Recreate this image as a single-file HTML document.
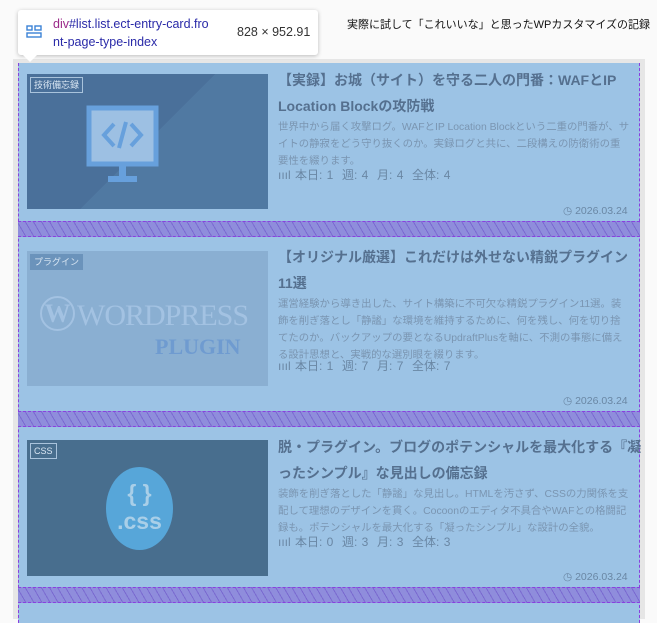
<!DOCTYPE html>
<html><head><meta charset="utf-8"><style>
*{box-sizing:border-box;margin:0;padding:0}
body{width:657px;height:611px;overflow:hidden;background:#fafafa;font-family:"Liberation Sans","Noto Sans CJK JP",sans-serif;position:relative}
.gray{position:absolute;left:13px;top:59px;width:632px;height:560px;background:#e6e6e6}
.blue{position:absolute;left:18px;top:63px;width:622px;height:560px;background:#9cc3e5;border-left:1px dashed #8a3fe0;border-right:1px dashed #8a3fe0}
.stripe{position:absolute;left:18px;width:622px;height:16px;border-top:1px dashed #8a3fe0;border-bottom:1px dashed #8a3fe0;background:#8f8ddc repeating-linear-gradient(60deg,transparent 0 6px,#7a6ad0 6px 7px)}
.thumb{position:absolute;left:27px;width:241px;overflow:hidden}
.tag{position:absolute;left:3px;top:3px;font-size:9px;color:#d9e6f3;border:1px solid #a9c3dc;padding:1px 3px;line-height:12px}
.title{position:absolute;left:278px;font-size:14px;line-height:26px;color:#55708f;font-weight:bold;white-space:nowrap}
.desc{position:absolute;left:278px;width:352px;font-size:10.4px;line-height:17px;color:#7a95b1}
.stat{position:absolute;left:278px;font-size:12px;color:#6a87a4;word-spacing:1px;white-space:nowrap}
.date{position:absolute;left:563px;font-size:10.5px;color:#6a87a4}
.tip{position:absolute;left:18px;top:10px;width:300px;height:45px;background:#fff;border-radius:3px;box-shadow:0 1px 4px rgba(0,0,0,.25)}
</style></head><body>
<div style="position:absolute;left:347px;top:16px;font-size:11px;color:#111;white-space:nowrap">実際に試して「これいいな」と思ったWPカスタマイズの記録</div>
<div class="gray"></div>
<div class="blue"></div>
<div class="stripe" style="top:221px"></div>
<div class="stripe" style="top:411px"></div>
<div class="stripe" style="top:587px"></div>

<div class="tip">
<svg style="position:absolute;left:8px;top:15px" width="16" height="13" viewBox="0 0 16 13" fill="none" stroke="#3b82d6" stroke-width="1.4"><rect x="1" y="1" width="5" height="4"/><rect x="9" y="1" width="6" height="4"/><rect x="1" y="8" width="14" height="4"/></svg>
<div style="position:absolute;left:35px;top:5px;font-size:12.5px;line-height:18px;color:#2a2aa8;white-space:nowrap">
<span style="color:#9b2a8a">div</span>#list.list.ect-entry-card.fro<br>nt-page-type-index</div>
<div style="position:absolute;left:219px;top:15px;font-size:12.5px;color:#333;white-space:nowrap">828 × 952.91</div>
</div>
<div style="position:absolute;left:23px;top:55px;width:0;height:0;border-left:7px solid transparent;border-right:7px solid transparent;border-top:7px solid #fff"></div>

<!-- card1 -->
<div class="thumb" style="top:74px;height:135px;background:linear-gradient(135deg,#4a709a 50%,#5079a2 50%)">
<div class="tag">技術備忘録</div>
<svg style="position:absolute;left:59px;top:31px" width="75" height="80" viewBox="0 0 75 80"><rect x="3" y="3" width="67" height="56" fill="#9dc0e3" stroke="#67a0dc" stroke-width="5"/><rect x="33" y="61" width="7" height="11" fill="#67a0dc"/><rect x="22" y="71" width="29" height="6" fill="#67a0dc"/><path d="M28 19 L18 30 L28 41 M45 19 L55 30 L45 41 M40 17 L33 43" stroke="#67a0dc" stroke-width="4" fill="none"/></svg>
</div>
<div class="title" style="top:67px">【実録】お城（サイト）を守る二人の門番：WAFとIP<br>Location Blockの攻防戦</div>
<div class="desc" style="top:119px">世界中から届く攻撃ログ。WAFとIP Location Blockという二重の門番が、サイトの静寂をどう守り抜くのか。実録ログと共に、二段構えの防衛術の重要性を綴ります。</div>
<div class="stat" style="top:166px">ıııl 本日: 1 &nbsp;週: 4 &nbsp;月: 4 &nbsp;全体: 4</div>
<div class="date" style="top:205px">◷ 2026.03.24</div>

<!-- card2 -->
<div class="thumb" style="top:251px;height:135px;background:#8aafd2">
<div class="tag" style="background:#6b93bb;border-color:#6b93bb">プラグイン</div>
<div style="position:absolute;left:13px;top:45px;width:35px;height:35px;border-radius:50%;border:2px solid #a3c2e2;color:#a3c2e2;font:bold 26px 'Liberation Serif',serif;text-align:center;line-height:31px">W</div>
<div style="position:absolute;left:50px;top:48px;font:30px 'Liberation Serif',serif;color:#a3c2e2;letter-spacing:-1px">WORDPRESS</div>
<div style="position:absolute;left:128px;top:83px;font:bold 22px 'Liberation Serif',serif;color:#6f9bd0">PLUGIN</div>
</div>
<div class="title" style="top:244px">【オリジナル厳選】これだけは外せない精鋭プラグイン<br>11選</div>
<div class="desc" style="top:296px">運営経験から導き出した、サイト構築に不可欠な精鋭プラグイン11選。装飾を削ぎ落とし「静謐」な環境を維持するために、何を残し、何を切り捨てたのか。バックアップの要となるUpdraftPlusを軸に、不測の事態に備える設計思想と、実戦的な選別眼を綴ります。</div>
<div class="stat" style="top:357px">ıııl 本日: 1 &nbsp;週: 7 &nbsp;月: 7 &nbsp;全体: 7</div>
<div class="date" style="top:395px">◷ 2026.03.24</div>

<!-- card3 -->
<div class="thumb" style="top:440px;height:136px;background:#486e8e">
<div class="tag">CSS</div>
<div style="position:absolute;left:79px;top:27px;width:67px;height:83px;border-radius:50%;background:#57a6d9;color:#a9cfe8;text-align:center;font:bold 23px 'Liberation Sans',sans-serif;line-height:28px;padding-top:12px">{ }<br>.css</div>
</div>
<div class="title" style="top:434px">脱・プラグイン。ブログのポテンシャルを最大化する『凝<br>ったシンプル』な見出しの備忘録</div>
<div class="desc" style="top:486px">装飾を削ぎ落とした「静謐」な見出し。HTMLを汚さず、CSSの力関係を支配して理想のデザインを貫く。Cocoonのエディタ不具合やWAFとの格闘記録も。ポテンシャルを最大化する「凝ったシンプル」な設計の全貌。</div>
<div class="stat" style="top:533px">ıııl 本日: 0 &nbsp;週: 3 &nbsp;月: 3 &nbsp;全体: 3</div>
<div class="date" style="top:571px">◷ 2026.03.24</div>
</body></html>
